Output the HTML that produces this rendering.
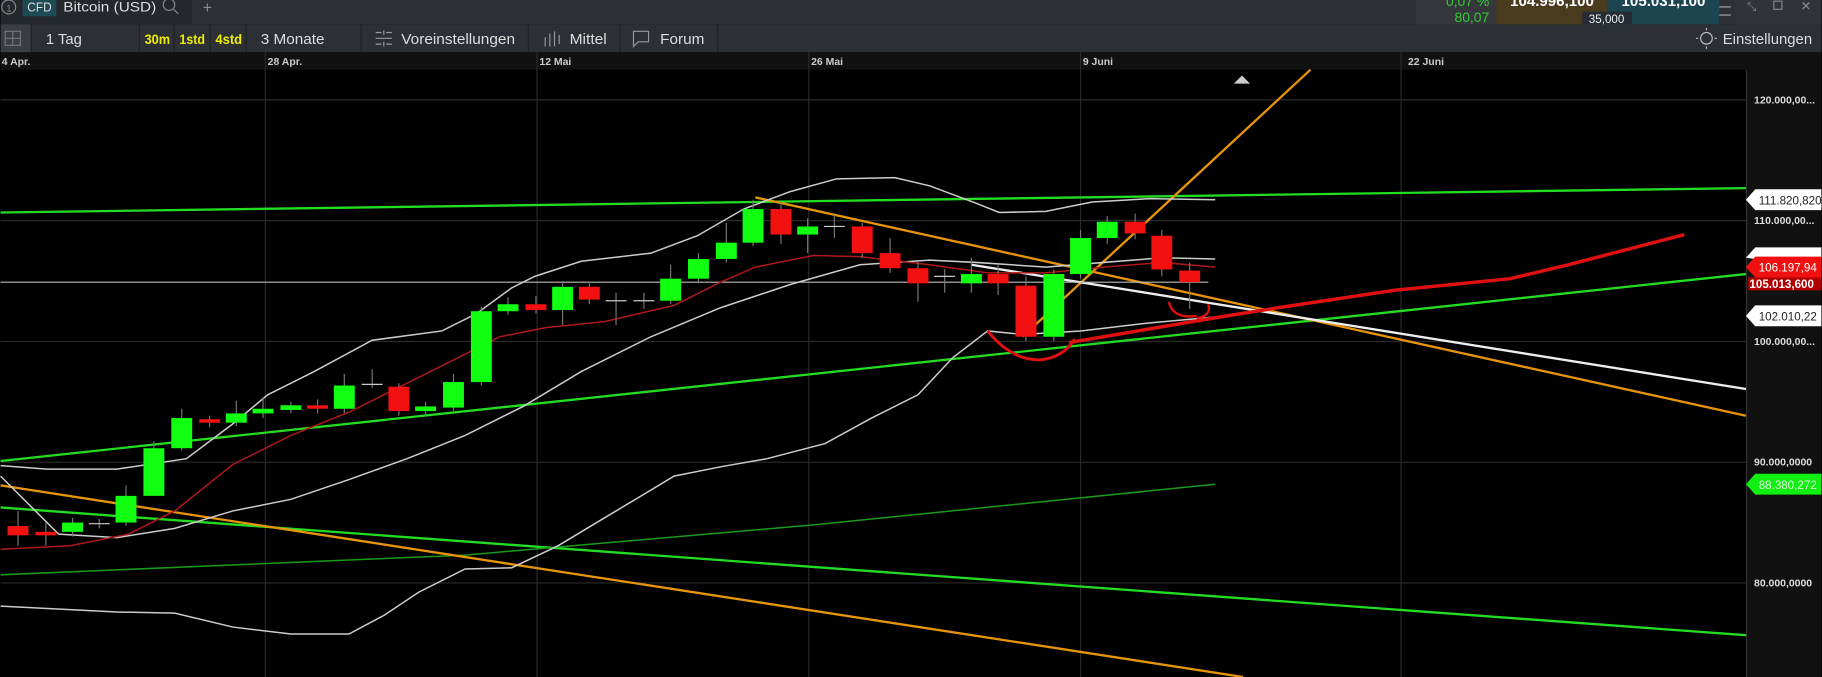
<!DOCTYPE html>
<html><head><meta charset="utf-8"><style>
body{margin:0;width:1822px;height:677px;overflow:hidden;background:#000;font-family:"Liberation Sans",sans-serif}
svg{display:block}
</style></head><body>
<svg width="1822" height="677" viewBox="0 0 1568 583" xmlns="http://www.w3.org/2000/svg" font-family="Liberation Sans, sans-serif">
<rect width="1568" height="583" fill="#000"/>
<!-- top bar -->
<rect x="0" y="0" width="1568" height="21" fill="#2c2f33"/>
<rect x="0" y="0" width="165" height="21" fill="#24272b"/>
<circle cx="7" cy="6" r="6" fill="none" stroke="#888" stroke-width="1"/>
<text x="5" y="10" font-size="8" fill="#888">1</text>
<rect x="19" y="0" width="29" height="14" fill="#1d4a55"/>
<text x="23" y="10" font-size="11" fill="#ddd" textLength="21" lengthAdjust="spacingAndGlyphs">CFD</text>
<text x="54" y="10" font-size="12" fill="#ddd" textLength="80" lengthAdjust="spacingAndGlyphs">Bitcoin (USD)</text>
<circle cx="145" cy="4" r="5" fill="none" stroke="#888"/>
<path d="M149 8l4 4" stroke="#888"/>
<text x="174" y="11" font-size="14" fill="#888">+</text>
<rect x="1219" y="0" width="69" height="21" fill="#34373b"/>
<text x="1282" y="19" font-size="12" fill="#3c3" text-anchor="end">80,07</text>
<text x="1282" y="5" font-size="12" fill="#3c3" text-anchor="end">0,07 %</text>
<rect x="1288" y="0" width="96" height="21" fill="#4a3a1e"/>
<text x="1336" y="5" font-size="13" fill="#fff" font-weight="bold" text-anchor="middle">104.996,100</text>
<rect x="1384" y="0" width="96" height="21" fill="#1d4551"/>
<text x="1432" y="5" font-size="13" fill="#fff" font-weight="bold" text-anchor="middle">105.031,100</text>
<rect x="1362" y="10" width="43" height="11" rx="2" fill="#252c33"/>
<text x="1383" y="20" font-size="10" fill="#eee" text-anchor="middle">35,000</text>
<rect x="1494" y="0" width="74" height="21" fill="#303337"/>
<path d="M1480 6h10M1480 13h10" stroke="#aaa"/>
<text x="1504" y="9" font-size="10" fill="#888">⤡</text>
<rect x="1527" y="1" width="7" height="7" fill="none" stroke="#888"/>
<text x="1550" y="9" font-size="11" fill="#888">✕</text>
<!-- toolbar -->
<rect x="0" y="21" width="1568" height="24" fill="#2c2f33"/>
<rect x="0" y="21" width="26" height="24" fill="#3a3d41"/>
<rect x="4" y="27" width="13" height="12" fill="none" stroke="#777"/>
<path d="M10.5 27v12M4 33h13" stroke="#777"/>
<g stroke="#1f2226" stroke-width="1"><path d="M26.5 21v24M119.5 21v24M149.5 21v24M180.5 21v24M211.5 21v24M310.5 21v24M454.5 21v24M533.5 21v24M617.5 21v24"/></g>
<text x="39" y="38" font-size="13" fill="#ddd" textLength="31" lengthAdjust="spacingAndGlyphs">1 Tag</text>
<text x="124" y="38" font-size="12" fill="#ee0" font-weight="bold" textLength="22" lengthAdjust="spacingAndGlyphs">30m</text>
<text x="154" y="38" font-size="12" fill="#ee0" font-weight="bold" textLength="22" lengthAdjust="spacingAndGlyphs">1std</text>
<text x="185" y="38" font-size="12" fill="#ee0" font-weight="bold" textLength="23" lengthAdjust="spacingAndGlyphs">4std</text>
<text x="224" y="38" font-size="13" fill="#ddd" textLength="55" lengthAdjust="spacingAndGlyphs">3 Monate</text>
<path d="M323 28h5M332 28h5M323 33h14M323 38h5M332 38h5M330 26v4M330 36v4" stroke="#999"/>
<text x="345" y="38" font-size="13" fill="#ddd" textLength="98" lengthAdjust="spacingAndGlyphs">Voreinstellungen</text>
<path d="M469 32v8M473 29v11M477 27v13M481 30v8" stroke="#999"/>
<text x="490" y="38" font-size="13" fill="#ddd" textLength="32" lengthAdjust="spacingAndGlyphs">Mittel</text>
<path d="M545 27h13v9h-9l-4 4z" fill="none" stroke="#999"/>
<text x="568" y="38" font-size="13" fill="#ddd" textLength="38" lengthAdjust="spacingAndGlyphs">Forum</text>
<circle cx="1469" cy="33" r="5" fill="none" stroke="#bbb"/>
<path d="M1462 33h-2M1478 33h-2M1469 26v-2M1469 40v2" stroke="#bbb"/>
<text x="1483" y="38" font-size="13" fill="#ddd" textLength="77" lengthAdjust="spacingAndGlyphs">Einstellungen</text>
<!-- date axis -->
<rect x="0" y="45" width="1568" height="15" fill="#111"/>
<g font-size="9" fill="#ccc" font-weight="bold"><text x="1" y="56">4 Apr.</text><text x="230" y="56">28 Apr.</text><text x="464" y="56">12 Mai</text><text x="698" y="56">26 Mai</text><text x="932" y="56">9 Juni</text><text x="1212" y="56">22 Juni</text></g>
<g stroke="#2a2a2a"><path d="M228 45v538M462 45v538M696 45v538M930 45v538M1206 45v538"/><path d="M0 86h1503M0 190h1503M0 294h1503M0 398h1503M0 502h1503"/></g>
<!-- right axis -->
<rect x="1503" y="60" width="65" height="523" fill="#111"/>
<path d="M1503.5 60v523" stroke="#333"/>
<g font-size="9" fill="#ddd" font-weight="bold"><text x="1510" y="89">120.000,00...</text><text x="1510" y="193">110.000,00...</text><text x="1510" y="297">100.000,00...</text><text x="1510" y="401">90.000,0000</text><text x="1510" y="505">80.000,0000</text></g>
<path d="M1062 72l7-7 7 7z" fill="#ccc"/>
<!-- lines -->
<g fill="none" stroke-width="1.3">
<path d="M0 183L1503 162" stroke="#2d2" stroke-width="2"/>
<path d="M0 397L1503 236" stroke="#2d2" stroke-width="2"/>
<path d="M0 437L1503 547" stroke="#2d2" stroke-width="2"/>
<path d="M0 495L400 478L700 452L1046 417" stroke="#1a9a1a"/>
<path d="M0 418L1070 583" stroke="#e8940a" stroke-width="2"/>
<path d="M880 290L1128 60" stroke="#e8940a" stroke-width="2"/>
<path d="M650 170L1503 358" stroke="#e8940a" stroke-width="2"/>
<path d="M836 228L1503 335" stroke="#eee" stroke-width="2"/>
<path d="M0 243H1040" stroke="#bbb" stroke-width="1"/>
<path d="M0 401L40 404L100 404L160 395L200 365L230 340L270 320L320 293L380 285L410 270L440 248L460 238L500 225L560 218L600 203L640 180L680 165L720 154L770 153L800 160L840 175L860 183L900 182L940 174L990 171L1046 172" stroke="#ccc"/>
<path d="M0 410L50 460L100 463L150 455L200 440L250 430L300 413L350 395L400 375L450 350L500 320L560 290L620 265L680 245L740 228L800 224L840 226L900 230L950 226L1000 222L1046 223" stroke="#ccc"/>
<path d="M0 522L100 527L150 528L200 540L250 546L300 546L330 530L360 510L400 490L440 489L480 470L530 440L580 410L620 402L660 395L710 382L750 360L790 340L820 308L850 285L880 288L930 285L990 278L1046 273" stroke="#ccc"/>
<path d="M0 473L60 470L110 460L150 440L200 400L250 375L300 355L350 330L400 305L430 290L470 282L520 277L580 263L620 243L650 230L700 220L740 221L800 228L850 235L900 235L950 230L1000 226L1046 230" stroke="#b01818"/>
<path d="M920 295L1050 273L1100 265L1200 250L1300 240L1350 228L1400 215L1450 202" stroke="#e01010" stroke-width="3"/>
<path d="M850 285Q870 310 895 310Q915 308 925 292" stroke="#e01010" stroke-width="2.5"/>
<path d="M1006 260Q1010 275 1030 272M1040 262Q1043 272 1030 274" stroke="#e01010" stroke-width="2"/>
</g>
<!-- candles -->
<g stroke-width="1">
<g stroke="#777">
<path d="M15 440v30M39 450v20M62 446v16M85 447v8M108 418v35M132 380v32M156 352v36M180 358v10M203 345v22M226 342v18M250 346v10M273 344v12M296 322v34M320 318v16M343 330v28M366 346v12M390 322v32M414 264v68M437 256v15M461 255v15M484 242v38M507 244v18M530 252v28M554 252v14M577 228v34M601 218v26M625 192v34M648 172v40M672 174v36M695 188v30M718 185v20M742 192v30M766 205v30M790 225v35M813 232v20M836 222v30M859 228v26M883 238v56M907 232v62M930 198v42M953 186v24M977 184v22M1000 198v40M1024 226v40"/>
</g>
<g fill="#1f1" stroke="none">
<rect x="53" y="450" width="18" height="8"/><rect x="99" y="427" width="18" height="23"/><rect x="123" y="386" width="18" height="41"/><rect x="147" y="360" width="18" height="26"/><rect x="194" y="356" width="18" height="8"/><rect x="217" y="352" width="18" height="4"/><rect x="241" y="349" width="18" height="4"/><rect x="287" y="332" width="18" height="20"/><rect x="357" y="350" width="18" height="4"/><rect x="381" y="329" width="18" height="22"/><rect x="405" y="268" width="18" height="61"/><rect x="428" y="262" width="18" height="6"/><rect x="475" y="247" width="18" height="20"/><rect x="568" y="240" width="18" height="19"/><rect x="592" y="223" width="18" height="17"/><rect x="616" y="209" width="18" height="14"/><rect x="639" y="180" width="18" height="29"/><rect x="686" y="195" width="18" height="7"/><rect x="827" y="236" width="18" height="8"/><rect x="898" y="236" width="18" height="54"/><rect x="921" y="205" width="18" height="31"/><rect x="944" y="191" width="18" height="14"/>
</g>
<g fill="#f21010" stroke="none">
<rect x="6" y="453" width="18" height="8"/><rect x="30" y="458" width="18" height="3"/><rect x="171" y="361" width="18" height="3"/><rect x="264" y="349" width="18" height="3"/><rect x="334" y="333" width="18" height="21"/><rect x="452" y="262" width="18" height="5"/><rect x="498" y="247" width="18" height="11"/><rect x="663" y="180" width="18" height="22"/><rect x="733" y="195" width="18" height="23"/><rect x="757" y="218" width="18" height="13"/><rect x="781" y="231" width="18" height="13"/><rect x="850" y="236" width="18" height="8"/><rect x="874" y="246" width="18" height="44"/><rect x="968" y="191" width="18" height="10"/><rect x="991" y="203" width="18" height="29"/><rect x="1015" y="233" width="18" height="10"/>
</g>
<g stroke="#ccc"><path d="M76 451h18M311 331h18M521 259h18M545 259h18M709 195h18M804 238h18"/></g>
</g>
<!-- price tags -->
<path d="M1503 172l8-9h57v18h-57z" fill="#fff"/><text x="1514" y="176" font-size="10" fill="#222">111.820,820</text>
<path d="M1503 222l8-9h57v10h-57z" fill="#fff"/>
<path d="M1503 230l8-9h57v18h-57z" fill="#f01010"/><text x="1514" y="234" font-size="10" fill="#fff">106.197,94</text>
<rect x="1505" y="239" width="63" height="11" fill="#b00000"/><text x="1506" y="248" font-size="10" fill="#fff" font-weight="bold">105.013,600</text>
<path d="M1503 272l8-9h57v18h-57z" fill="#fff"/><text x="1514" y="276" font-size="10" fill="#222">102.010,22</text>
<path d="M1503 417l8-9h57v18h-57z" fill="#1e1"/><text x="1514" y="421" font-size="10" fill="#dfd">88.380,272</text>
</svg>
</body></html>
